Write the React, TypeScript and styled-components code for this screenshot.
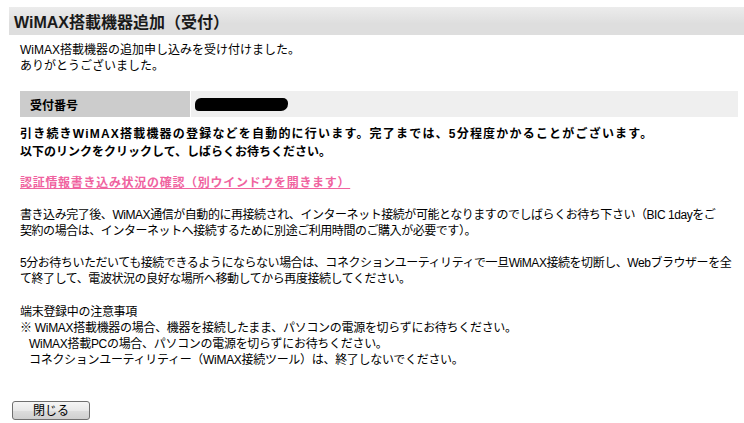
import React from "react";
import styled, { createGlobalStyle } from "styled-components";

const GlobalStyle = createGlobalStyle`
  html, body { margin: 0; padding: 0; background: #fff; }
  body {
    font-family: "Liberation Sans", "Noto Sans CJK JP", sans-serif;
    font-size: 12px;
    color: #000;
  }
`;

const Page = styled.div`
  width: 744px;
  padding-top: 7px;
  box-sizing: border-box;
`;

const Header = styled.h1`
  margin: 0 0 0 9px;
  height: 28px;
  display: flex;
  align-items: center;
  padding-left: 5px;
  font-size: 16px;
  font-weight: bold;
  color: #1a1a1a;
  background: linear-gradient(#ececec, #dedede 60%, #dedede);
`;

const Content = styled.div`
  padding: 0 6px 0 20px;
`;

const Para = styled.p<{ $top: number; $bold?: boolean; $spacing?: number }>`
  margin: ${(p) => p.$top}px 0 0;
  line-height: ${(p) => (p.$bold ? 18 : 16)}px;
  font-weight: ${(p) => (p.$bold ? "bold" : "normal")};
  letter-spacing: ${(p) => p.$spacing ?? 0}px;
  white-space: nowrap;
`;

const Spaced = styled.span<{ $spacing: number }>`
  letter-spacing: ${(p) => p.$spacing}px;
`;

const Table = styled.div`
  margin-top: 17px;
  display: grid;
  grid-template-columns: 170px 1fr;
  column-gap: 1px;
  height: 26px;
`;

const HeadCell = styled.div`
  background: #cccccc;
  display: flex;
  align-items: center;
  padding-left: 10px;
  font-weight: bold;
`;

const ValueCell = styled.div`
  background: #efefef;
  display: flex;
  align-items: center;
  padding-left: 4px;
`;

const Redacted = styled.span`
  display: inline-block;
  width: 93px;
  height: 13px;
  background: #000;
  border-radius: 6px 5px 7px 4px;
`;

const LinkLine = styled.a`
  display: block;
  margin-top: 14px;
  line-height: 16px;
  color: #f0639f;
  font-weight: bold;
  letter-spacing: 0.7px;
  text-decoration: underline;
  cursor: pointer;
`;

const Indent = styled.span`
  padding-left: 9px;
`;

const CloseButton = styled.button`
  margin: 33px 0 0 12px;
  width: 78px;
  height: 19px;
  padding: 0;
  font-family: "Liberation Sans", "Noto Sans CJK JP", sans-serif;
  font-size: 12px;
  color: #000;
  border: 1px solid #707070;
  border-radius: 3px;
  background: linear-gradient(#f6f6f6, #e8e8e8 50%, #dddddd 51%, #cfcfcf);
  display: block;
  line-height: 16px;
`;

export default function App() {
  return (
    <>
      <GlobalStyle />
      <Page>
        <Header>WiMAX搭載機器追加（受付）</Header>
        <Content>
          <Para $top={7}>
            WiMAX搭載機器の追加申し込みを受け付けました。
            <br />
            ありがとうございました。
          </Para>
          <Table>
            <HeadCell>受付番号</HeadCell>
            <ValueCell>
              <Redacted />
            </ValueCell>
          </Table>
          <Para $top={8} $bold>
            <Spaced $spacing={1.2}>
              引き続きWiMAX搭載機器の登録などを自動的に行います。完了までは、5分程度かかることがございます。
            </Spaced>
            <br />
            以下のリンクをクリックして、しばらくお待ちください。
          </Para>
          <LinkLine>認証情報書き込み状況の確認（別ウインドウを開きます）</LinkLine>
          <Para $top={16} $spacing={-0.45}>
            書き込み完了後、WiMAX通信が自動的に再接続され、インターネット接続が可能となりますのでしばらくお待ち下さい（BIC 1dayをご
            <br />
            契約の場合は、インターネットへ接続するために別途ご利用時間のご購入が必要です）。
          </Para>
          <Para $top={16} $spacing={-0.45}>
            5分お待ちいただいても接続できるようにならない場合は、コネクションユーティリティで一旦WiMAX接続を切断し、Webブラウザーを全
            <br />
            て終了して、電波状況の良好な場所へ移動してから再度接続してください。
          </Para>
          <Para $top={17} $spacing={-0.3}>
            端末登録中の注意事項
            <br />
            ※ WiMAX搭載機器の場合、機器を接続したまま、パソコンの電源を切らずにお待ちください。
            <br />
            <Indent>WiMAX搭載PCの場合、パソコンの電源を切らずにお待ちください。</Indent>
            <br />
            <Indent>コネクションユーティリティー（WiMAX接続ツール）は、終了しないでください。</Indent>
          </Para>
        </Content>
        <CloseButton>閉じる</CloseButton>
      </Page>
    </>
  );
}
